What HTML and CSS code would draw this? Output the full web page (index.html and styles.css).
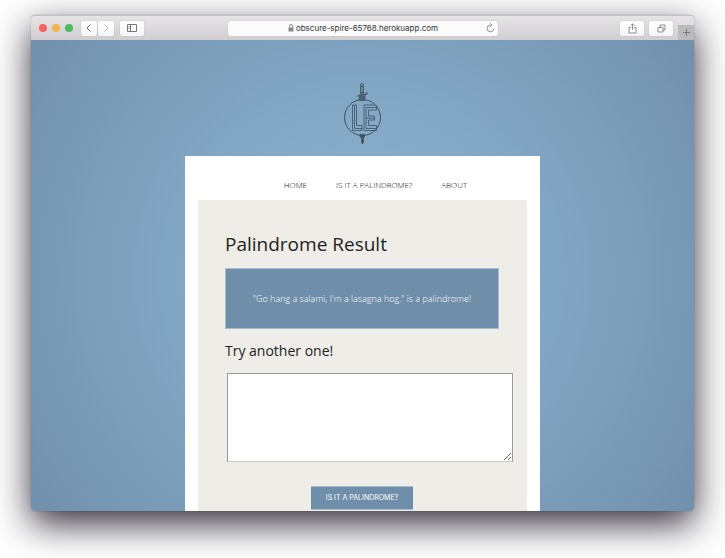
FILE: index.html
```html
<!DOCTYPE html>
<html lang="en">
<head>
<meta charset="utf-8">
<meta name="viewport" content="width=device-width, initial-scale=1">
<title>Palindrome Result</title>
<link rel="stylesheet" href="styles.css">
</head>
<body>
<div class="window">
  <header class="toolbar">
    <div class="lights">
      <span class="light red"></span><span class="light amber"></span><span class="light green"></span>
    </div>
    <div class="history">
      <button class="tool" type="button" aria-label="Back"><svg width="8" height="10" viewBox="0 0 8 10"><path d="M5.500 1.500 2 5l3.500 3.500" stroke="#666"/></svg></button>
      <button class="tool" type="button" aria-label="Forward"><svg width="8" height="10" viewBox="0 0 8 10"><path d="M2.500 1.500 6 5 2.500 8.500" stroke="#b5b5b5"/></svg></button>
    </div>
    <button class="tool wide" type="button" aria-label="Sidebar"><svg width="10" height="8" viewBox="0 0 10 8"><path d="M.5.5h9v7h-9zM3.500.5v7M1.500 2.500h1M1.500 4.500h1" stroke="#777"/></svg></button>
    <div class="address">
      <span class="url"><svg width="6" height="8" viewBox="0 0 6 8"><path d="M.5 3.500h5v4h-5z" fill="#888" stroke="none"/><path d="M1.500 3.500V2a1.500 1.500 0 0 1 3 0v1.500" stroke="#888"/></svg>obscure-spire-65768.herokuapp.com</span>
      <button class="reload" type="button" aria-label="Reload"><svg width="9" height="10" viewBox="0 0 9 10"><path d="M4.500 2A3.400 3.400 0 1 0 7.900 5.500M4 .3 6 2 4 3.800" stroke="#777" stroke-width=".8"/></svg></button>
    </div>
    <button class="tool wide" type="button" aria-label="Share"><svg width="9" height="11" viewBox="0 0 9 11"><path d="M3 4.500H1v5.500h7V4.500H6M4.500 7V1M2.700 2.700 4.500.9l1.800 1.800" stroke="#777" stroke-width=".8"/></svg></button>
    <button class="tool wide" type="button" aria-label="Tabs"><svg width="9" height="9" viewBox="0 0 9 9"><path d="M1 3.500h5v4.500H1zM3 3.500V1h5v5H6" stroke="#777" stroke-width=".8"/></svg></button>
    <button class="newtab" type="button" aria-label="New tab"><svg width="7" height="7" viewBox="0 0 7 7"><path d="M3.500 0v7M0 3.500h7" stroke="#777"/></svg></button>
  </header>
  <main class="page">
    <svg class="logo" width="40" height="64" viewBox="0 0 40 64" role="img" aria-label="LE">
      <g stroke="#405261" stroke-width=".8">
        <circle cx="19.500" cy="35.500" r="18" stroke-width="1"/>
        <path d="M17.500 12V2.500q1.500-3 3 0V12zM18 4.500h2M18 10.500h2" fill="#6d8799"/>
        <path d="M14.500 14.500q1.500-1.500 4-1.500h2.500q2.500 0 3-2.500" stroke-width="1.300"/>
        <path d="M16.500 14.500v4h5.500v-4z" fill="#4b6070"/>
        <path d="M17 52.500h4.500v2.500h-1v5l-1 2-1-2v-5h-1.500z" fill="#405261"/>
        <path d="M9.500 23h4v20.500h5.500V48.500H9.500zM11.500 23v23.500h7.500M21 23h11.500l1 1v4h-8v6h6v4h-6v5.500h8v5H21zM33 25.500H23v21h10.500M23 36h8.500"/>
      </g>
    </svg>
    <div class="card">
      <nav class="nav">
        <a href="#home">HOME</a>
        <a href="#palindrome">IS IT A PALINDROME?</a>
        <a href="#about">ABOUT</a>
      </nav>
      <section class="panel">
        <h1>Palindrome Result</h1>
        <p class="result">"Go hang a salami, I'm a lasagna hog." is a palindrome!</p>
        <form class="form">
          <label for="phrase">Try another one!</label>
          <textarea id="phrase"></textarea>
          <button class="submit" type="submit">IS IT A PALINDROME?</button>
        </form>
      </section>
    </div>
  </main>
</div>
</body>
</html>
```
FILE: styles.css
```css
* {
  box-sizing: border-box;
}

body {
  margin: 0;
  height: 100vh;
  padding: 15px 31px 47px;
  overflow: hidden;
  background: #fff;
  font-family: "Open Sans", sans-serif;
  color: #222;
}

svg {
  display: block;
  fill: none;
}

button {
  margin: 0;
  padding: 0;
  border: 0;
  font-family: inherit;
}

.window {
  display: flex;
  flex-direction: column;
  height: 100%;
  border-radius: 4px;
  box-shadow: 0 0 1px rgba(0, 0, 0, .6), 0 13px 36px rgba(15, 10, 25, .85);
}

.toolbar {
  display: flex;
  align-items: center;
  flex: none;
  height: 25px;
  padding-left: 8px;
  border-top: 1px solid #c2c2c2;
  border-radius: 4px 4px 0 0;
  background: linear-gradient(#e6e4e6, #d0ced0);
}

.lights {
  display: flex;
  gap: 5px;
}

.light {
  width: 8px;
  height: 8px;
  border-radius: 50%;
}

.red { background: #f2655e; }
.amber { background: #f3b44b; }
.green { background: #4cbb5c; }

.history {
  display: flex;
  gap: 1px;
  margin: 0 6px 0 8px;
}

.tool {
  display: flex;
  align-items: center;
  justify-content: center;
  width: 16px;
  height: 15px;
  border-radius: 2px;
  background: linear-gradient(#fff, #f5f5f5);
  box-shadow: 0 0 1px rgba(0, 0, 0, .35);
}

.wide {
  width: 24px;
}

.address {
  display: flex;
  align-items: center;
  flex: 1;
  height: 15px;
  margin: 0 122px 0 84px;
  border-radius: 2px;
  background: #fbfbfb;
  box-shadow: 0 0 1px rgba(0, 0, 0, .35);
}

.url {
  display: flex;
  align-items: center;
  justify-content: center;
  gap: 2px;
  flex: 1;
  padding-left: 12px;
  font: 8px/15px Inter, sans-serif;
  color: #333;
}

.reload {
  width: 12px;
  background: none;
}

.toolbar > .wide + .wide {
  margin-left: 5px;
}

.newtab {
  display: flex;
  align-items: center;
  justify-content: center;
  align-self: flex-end;
  width: 16px;
  height: 15px;
  margin-left: 5px;
  background: #bab9bb;
}

.page {
  display: flex;
  flex-direction: column;
  align-items: center;
  flex: 1;
  min-height: 0;
  overflow: hidden;
  padding-top: 42px;
  border-radius: 0 0 4px 4px;
  background: radial-gradient(circle at center, #8bb1cd 0%, #83a9c6 40%, #7b9dba 70%, #7190ac 100%);
}

.logo {
  flex: none;
}

.card {
  flex: none;
  width: 100%;
  max-width: 355px;
  margin-top: 10px;
  padding: 0 13px;
  background: #fff;
}

.nav {
  display: flex;
  align-items: center;
  justify-content: center;
  gap: 29px;
  height: 44px;
  padding: 14px 0 0 26px;
}

.nav a {
  font-size: 8px;
  line-height: 12px;
  font-weight: 300;
  color: #000;
  text-decoration: none;
}

.panel {
  padding: 30px 28px 40px 27px;
  background: #efede8;
}

h1 {
  margin: 0;
  font-size: 19px;
  line-height: 28px;
  font-weight: 400;
}

.result {
  margin: 10px 0 0;
  padding: 22px 0;
  border: 1px solid #a9bccb;
  background: #6f8eaa;
  font-size: 9px;
  line-height: 15px;
  font-weight: 300;
  text-align: center;
  color: #fff;
}

.form {
  display: flex;
  flex-direction: column;
  align-items: center;
}

.form label {
  align-self: flex-start;
  margin: 11px 0;
  font-size: 14px;
  line-height: 22px;
}

textarea {
  align-self: flex-start;
  width: calc(100% + 12px);
  height: 89px;
  margin: 0 0 0 2px;
  border: 1px solid #999;
  border-bottom-color: #c8c8c8;
  border-radius: 0;
  background: #fff;
}

.submit {
  height: 24px;
  margin-top: 24px;
  padding: 0 15px;
  border-top: 1px solid #a9bccb;
  border-bottom: 1px solid #a9bccb;
  background: #6f8eaa;
  font: 7px/22px Inter, sans-serif;
  color: #fff;
}
```
